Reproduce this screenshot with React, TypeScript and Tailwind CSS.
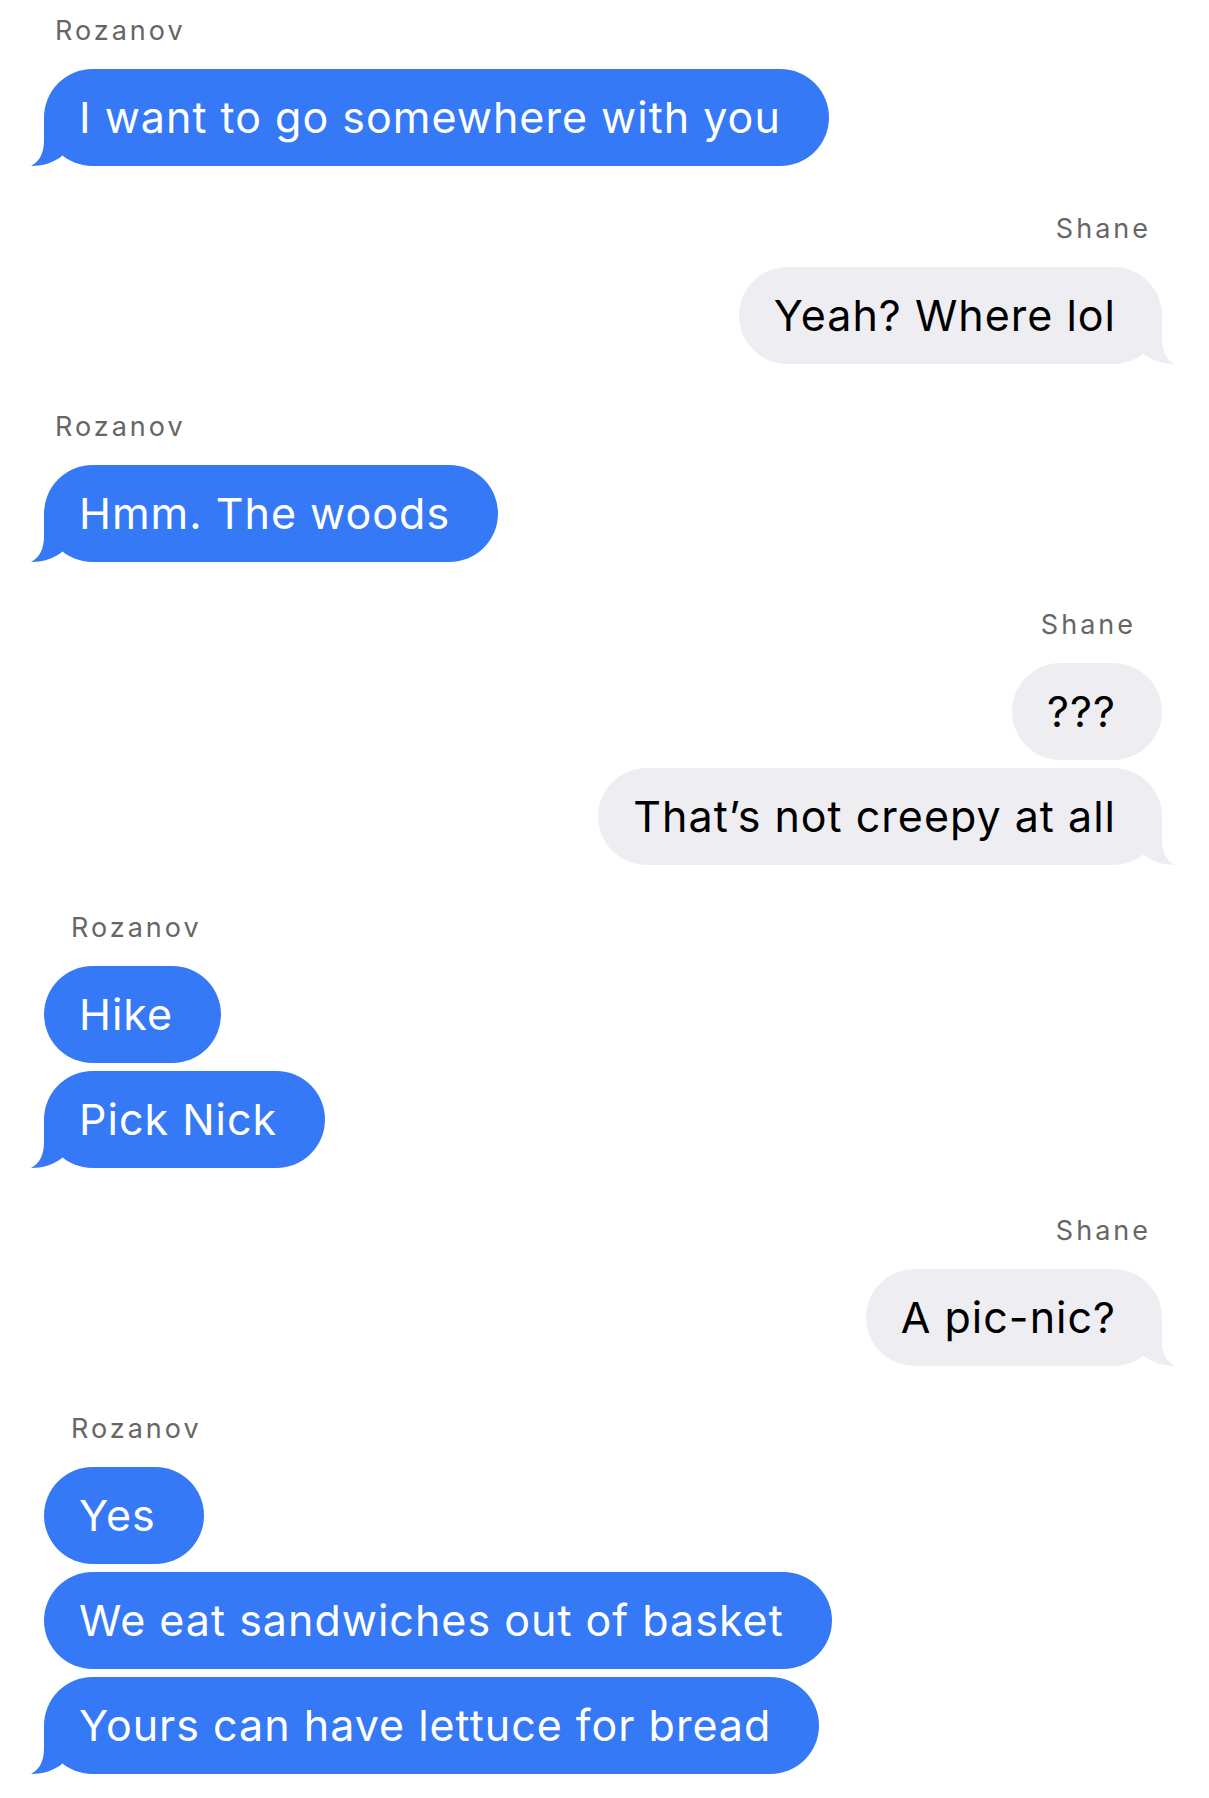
import React from "react";

type Group = {
  from: "Rozanov" | "Shane";
  indent: string;
  messages: string[];
};

const groups: Group[] = [
  { from: "Rozanov", indent: "pl-[11px]", messages: ["I want to go somewhere with you"] },
  { from: "Shane", indent: "pr-[11px]", messages: ["Yeah? Where lol"] },
  { from: "Rozanov", indent: "pl-[11px]", messages: ["Hmm. The woods"] },
  { from: "Shane", indent: "pr-[26px]", messages: ["???", "That’s not creepy at all"] },
  { from: "Rozanov", indent: "pl-[27px]", messages: ["Hike", "Pick Nick"] },
  { from: "Shane", indent: "pr-[11px]", messages: ["A pic-nic?"] },
  {
    from: "Rozanov",
    indent: "pl-[27px]",
    messages: ["Yes", "We eat sandwiches out of basket", "Yours can have lettuce for bread"],
  },
];

// little curl under the last bubble of a run
const Tail = ({ mine }: { mine: boolean }) => (
  <svg
    width="40"
    height="48"
    viewBox="0 0 40 48"
    className={
      mine
        ? "absolute bottom-0 right-[-13px] -scale-x-100"
        : "absolute bottom-0 left-[-13px]"
    }
  >
    <path
      d="M13 0 L13 22 C13 35 9 43 0 48 C11 48 22 45 31 38 L40 22 L40 0 Z"
      fill={mine ? "#eeeef2" : "#3579f6"}
    />
  </svg>
);

const Bubble = ({ text, mine, tail }: { text: string; mine: boolean; tail: boolean }) => (
  <div
    className={`relative rounded-full py-[22px] pl-[35px] text-[43px] leading-[53px] tracking-[1px] whitespace-nowrap ${
      mine ? "bg-[#eeeef2] text-black pr-[46px]" : "bg-[#3579f6] text-white pr-[48px]"
    }`}
  >
    <span className="relative z-10">{text}</span>
    {tail && <Tail mine={mine} />}
  </div>
);

export default function App() {
  return (
    <div
      className="min-h-[1798px] w-[1209px] bg-white pt-[14px] pl-[44px] pr-[47px] pb-6"
      style={{ fontFamily: "Inter, 'Noto Sans', sans-serif" }}
    >
      {groups.map((g, gi) => {
        const mine = g.from === "Shane";
        return (
          <div
            key={gi}
            className={`flex flex-col ${mine ? "items-end" : "items-start"} ${gi > 0 ? "mt-[46px]" : ""}`}
          >
            <div
              className={`${g.indent} mb-[21px] text-[27px] leading-[34px] tracking-[3px] text-[#666666]`}
            >
              {g.from}
            </div>
            <div className={`flex flex-col gap-[8px] ${mine ? "items-end" : "items-start"}`}>
              {g.messages.map((m, mi) => (
                <Bubble key={mi} text={m} mine={mine} tail={mi === g.messages.length - 1} />
              ))}
            </div>
          </div>
        );
      })}
    </div>
  );
}
